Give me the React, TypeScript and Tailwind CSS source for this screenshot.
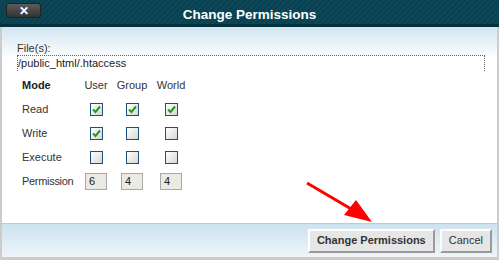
import React from "react";

function Box({ checked }: { checked?: boolean }) {
  return (
    <div className="w-[13px] h-[13px] border border-[#1c4f7c] bg-[linear-gradient(135deg,#ffffff,#d8d8d2)] flex items-center justify-center">
      {checked && (
        <svg width="9" height="9" viewBox="0 0 9 9">
          <path d="M1 4.5 L3.5 7 L8 1.5" fill="none" stroke="#1f9a1f" strokeWidth="2" />
        </svg>
      )}
    </div>
  );
}

function Field({ v }: { v: string }) {
  return (
    <div className="w-[22px] h-[17px] border border-[#a8a8a8] bg-[#ebebe4] text-[11px] leading-[15px] pl-[3px] text-[#222]">
      {v}
    </div>
  );
}

export default function App() {
  const rows: { label: string; cells: boolean[] }[] = [
    { label: "Read", cells: [true, true, true] },
    { label: "Write", cells: [true, false, false] },
    { label: "Execute", cells: [false, false, false] },
  ];
  return (
    <div className="relative w-[499px] h-[260px] flex flex-col font-['Liberation_Sans',Arial,sans-serif] text-[#333]">
      <div className="relative h-[24px] flex items-center justify-center bg-[repeating-linear-gradient(135deg,#0a4150_0px,#0a4150_2px,#0d4858_2px,#0d4858_4px)]">
        <div className="absolute left-[6px] top-[3px] w-[35px] h-[15px] rounded-[3px] bg-[linear-gradient(to_bottom,#5c5c5c,#333333)] border border-[#222] flex items-center justify-center text-white text-[12px] font-bold leading-none">
          ✕
        </div>
        <div className="text-white font-bold text-[13.5px] mt-[6px]">Change Permissions</div>
      </div>
      <div className="h-[3px] bg-[#04303c]" />
      <div className="flex-1 flex flex-col border-x-2 border-b-[3px] border-[#cccccc]">
        <div className="flex-1 bg-[linear-gradient(to_bottom,#d2e5f1,#ffffff_32px)] pl-[15px] pr-[12px] pt-[15px]">
          <div className="text-[11px] leading-[13px] text-[#333]">File(s):</div>
          <div className="h-[16px] border-t border-l border-r border-dotted border-[#666] text-[11px] leading-[15px] text-[#222]">
            /public_html/.htaccess
          </div>
          <div className="grid grid-cols-[56px_36px_36px_42px] auto-rows-[24px] items-center pl-[5px] mt-[2px] text-[11px]">
            <div className="font-bold text-[#222]">Mode</div>
            <div className="text-center">User</div>
            <div className="text-center">Group</div>
            <div className="text-center">World</div>
            {rows.map((r) => (
              <React.Fragment key={r.label}>
                <div>{r.label}</div>
                {r.cells.map((c, i) => (
                  <div key={i} className="flex justify-center">
                    <Box checked={c} />
                  </div>
                ))}
              </React.Fragment>
            ))}
            <div className="tracking-[-0.3px]">Permission</div>
            <div className="flex justify-center">
              <Field v="6" />
            </div>
            <div className="flex justify-center">
              <Field v="4" />
            </div>
            <div className="flex justify-center">
              <Field v="4" />
            </div>
          </div>
        </div>
        <div className="h-[34px] border-t border-[#c8c8c8] bg-[linear-gradient(to_bottom,#cde2ef,#eef5fa)] flex items-center justify-end gap-[5px] pr-[5px]">
          <div className="h-[24px] px-[7px] flex items-center bg-[#e6e6e6] border-2 border-t-white border-l-white border-r-[#9a9a9a] border-b-[#9a9a9a] text-[11px] font-bold text-[#333]">
            Change Permissions
          </div>
          <div className="h-[24px] px-[7px] flex items-center bg-[#e6e6e6] border-2 border-t-white border-l-white border-r-[#9a9a9a] border-b-[#9a9a9a] text-[11px] text-[#333]">
            Cancel
          </div>
        </div>
      </div>
      <svg className="absolute left-0 top-0 pointer-events-none" width="499" height="260">
        <line x1="307" y1="183" x2="358" y2="213" stroke="#ff0000" strokeWidth="3" />
        <polygon points="372,222 344,215 356,200" fill="#ff0000" />
      </svg>
    </div>
  );
}
